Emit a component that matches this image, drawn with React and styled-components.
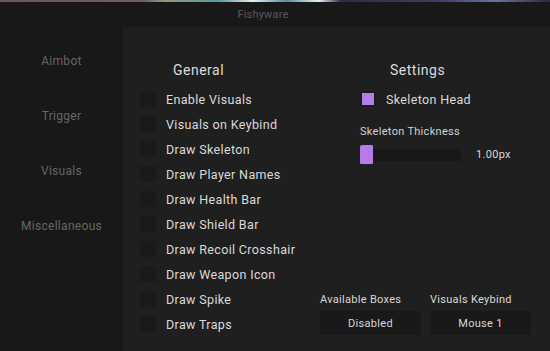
import React from 'react';
import styled, { createGlobalStyle } from 'styled-components';

const GlobalStyle = createGlobalStyle`
  html, body {
    margin: 0;
    padding: 0;
    background: #181818;
    font-family: Roboto, "Noto Sans", sans-serif;
  }
`;

const Window = styled.div`
  width: 550px;
  height: 351px;
  display: flex;
  flex-direction: column;
  background: #181818;
  overflow: hidden;
`;

const Backdrop = styled.div`
  height: 2px;
  flex-shrink: 0;
  background: linear-gradient(90deg, #6a5566 0%, #6f5a6a 26%, #8c9a78 30%, #5f9aa0 40%, #e6eef0 46%, #5a8f98 52%, #e8eef2 58%, #2c2c48 62%, #3a3f66 80%, #6a73a0 90%, #2a2a40 100%);
`;

const TitleBar = styled.div`
  height: 25px;
  flex-shrink: 0;
  display: flex;
  align-items: center;
  justify-content: center;
  padding-right: 24px;
  color: #585858;
  font-size: 11px;
  letter-spacing: 0.2px;
`;

const Body = styled.div`
  flex: 1;
  display: flex;
  min-height: 0;
`;

const Sidebar = styled.nav`
  width: 123px;
  flex-shrink: 0;
  display: flex;
  flex-direction: column;
  align-items: center;
  padding-top: 27px;
  gap: 41px;
`;

const NavItem = styled.div`
  height: 14px;
  line-height: 14px;
  font-size: 12px;
  letter-spacing: 0.3px;
  color: #666666;
`;

const Panel = styled.main`
  flex: 1;
  background: #1f1f1f;
  display: flex;
  padding: 34px 0 16px 17px;
`;

const LeftColumn = styled.section`
  width: 180px;
  display: flex;
  flex-direction: column;
`;

const RightColumn = styled.section`
  flex: 1;
  display: flex;
  flex-direction: column;
`;

const Heading = styled.h3`
  margin: 0 0 12px ${p => p.$indent}px;
  height: 18px;
  line-height: 18px;
  font-size: 14px;
  font-weight: 400;
  color: #dcdcdc;
  letter-spacing: 0.5px;
`;

const Row = styled.label`
  display: flex;
  align-items: center;
  height: 16px;
  margin-bottom: 9px;
  gap: 10px;
`;

const Box = styled.span`
  width: 16px;
  height: 16px;
  flex-shrink: 0;
  box-sizing: border-box;
  background: ${p => (p.$checked ? '#b57bea' : '#1a1a1a')};
  border: 2px solid #1a1a1a;
`;

const Label = styled.span`
  font-size: 12.5px;
  color: #dadada;
  letter-spacing: 0.35px;
`;

const Settings = styled.div`
  padding-left: 40px;
  display: flex;
  flex-direction: column;
`;

const SliderLabel = styled.div`
  font-size: 11px;
  color: #d2d2d2;
  letter-spacing: 0.3px;
  margin-top: 9px;
  height: 14px;
  line-height: 14px;
`;

const SliderRow = styled.div`
  display: flex;
  align-items: center;
  margin-top: 9px;
  gap: 15px;
`;

const Track = styled.div`
  position: relative;
  width: 101px;
  height: 12px;
  background: #181818;
`;

const Thumb = styled.span`
  position: absolute;
  left: 0;
  top: -4px;
  width: 13px;
  height: 19px;
  background: #b57bea;
  border-radius: 2px 1px 1px 1px;
`;

const Value = styled.span`
  font-size: 11px;
  color: #d8d8d8;
  letter-spacing: 0.3px;
`;

const Dropdowns = styled.div`
  margin-top: auto;
  display: flex;
  gap: 9px;
`;

const Field = styled.div`
  display: flex;
  flex-direction: column;
  gap: 4px;
`;

const FieldLabel = styled.div`
  font-size: 11px;
  color: #d8d8d8;
  letter-spacing: 0.3px;
  height: 14px;
  line-height: 14px;
`;

const Select = styled.div`
  width: 101px;
  height: 24px;
  display: flex;
  align-items: center;
  justify-content: center;
  background: #191919;
  font-size: 11px;
  color: #d8d8d8;
  letter-spacing: 0.3px;
`;

const options = [
  'Enable Visuals',
  'Visuals on Keybind',
  'Draw Skeleton',
  'Draw Player Names',
  'Draw Health Bar',
  'Draw Shield Bar',
  'Draw Recoil Crosshair',
  'Draw Weapon Icon',
  'Draw Spike',
  'Draw Traps',
];

const tabs = ['Aimbot', 'Trigger', 'Visuals', 'Miscellaneous'];

export default function App() {
  return (
    <Window>
      <GlobalStyle />
      <Backdrop />
      <TitleBar>Fishyware</TitleBar>
      <Body>
        <Sidebar>
          {tabs.map(t => (
            <NavItem key={t}>{t}</NavItem>
          ))}
        </Sidebar>
        <Panel>
          <LeftColumn>
            <Heading $indent={33}>General</Heading>
            {options.map(o => (
              <Row key={o}>
                <Box />
                <Label>{o}</Label>
              </Row>
            ))}
          </LeftColumn>
          <RightColumn>
            <Settings>
              <Heading $indent={30}>Settings</Heading>
              <Row>
                <Box $checked />
                <Label>Skeleton Head</Label>
              </Row>
              <SliderLabel>Skeleton Thickness</SliderLabel>
              <SliderRow>
                <Track>
                  <Thumb />
                </Track>
                <Value>1.00px</Value>
              </SliderRow>
            </Settings>
            <Dropdowns>
              <Field>
                <FieldLabel>Available Boxes</FieldLabel>
                <Select>Disabled</Select>
              </Field>
              <Field>
                <FieldLabel>Visuals Keybind</FieldLabel>
                <Select>Mouse 1</Select>
              </Field>
            </Dropdowns>
          </RightColumn>
        </Panel>
      </Body>
    </Window>
  );
}
